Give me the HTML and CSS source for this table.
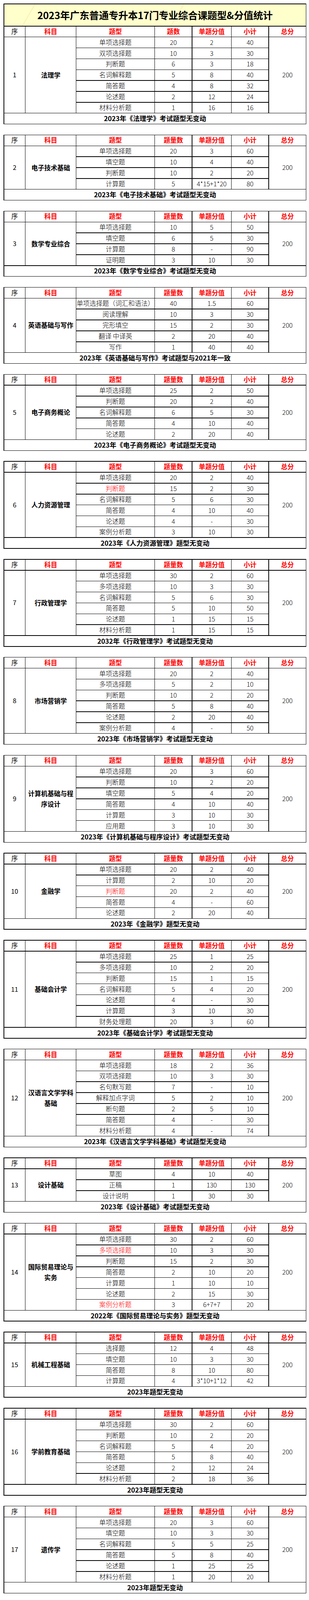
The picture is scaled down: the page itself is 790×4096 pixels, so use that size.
FILE: index.html
```html
<!DOCTYPE html>
<html lang="zh-CN">
<head>
<meta charset="utf-8">
<title>2023年广东普通专升本17门专业综合课题型&amp;分值统计</title>
<link rel="stylesheet" href="styles.css">
</head>
<body>
<main class="page">

<section class="sheet">
  <div class="title"><span class="mark mark-a"></span><span class="mark mark-b"></span><span class="title-text">2023年广东普通专升本17门专业综合课题型&amp;分值统计</span></div>
  <div class="hd hd-seq">序</div><div class="hd">科目</div><div class="hd">题型</div><div class="hd">题数</div><div class="hd">单题分值</div><div class="hd">小计</div><div class="hd">总分</div>
  <div class="seq r7">1</div><div class="subj r7">法理学</div>
  <div class="ty">单项选择题</div><div class="c4">20</div><div class="c5">2</div><div class="c6">40</div><div class="tot r7">200</div>
  <div class="ty">双项选择题</div><div class="c4">10</div><div class="c5">3</div><div class="c6">30</div>
  <div class="ty">判断题</div><div class="c4">6</div><div class="c5">3</div><div class="c6">18</div>
  <div class="ty">名词解释题</div><div class="c4">5</div><div class="c5">8</div><div class="c6">40</div>
  <div class="ty">简答题</div><div class="c4">4</div><div class="c5">8</div><div class="c6">32</div>
  <div class="ty">论述题</div><div class="c4">2</div><div class="c5">12</div><div class="c6">24</div>
  <div class="ty">材料分析题</div><div class="c4">1</div><div class="c5">16</div><div class="c6">16</div>
  <div class="foot">2023年《法理学》考试题型无变动</div>
</section>

<section class="sheet">
  <div class="hd hd-seq">序</div><div class="hd">科目</div><div class="hd">题型</div><div class="hd">题量数</div><div class="hd">单题分值</div><div class="hd">小计</div><div class="hd">总分</div>
  <div class="seq r4">2</div><div class="subj r4">电子技术基础</div>
  <div class="ty">单项选择题</div><div class="c4">20</div><div class="c5">3</div><div class="c6">60</div><div class="tot r4">200</div>
  <div class="ty">填空题</div><div class="c4">10</div><div class="c5">4</div><div class="c6">40</div>
  <div class="ty">判断题</div><div class="c4">10</div><div class="c5">2</div><div class="c6">20</div>
  <div class="ty">计算题</div><div class="c4">5</div><div class="c5">4*15+1*20</div><div class="c6">80</div>
  <div class="foot">2023年《电子技术基础》考试题型无变动</div>
</section>

<section class="sheet">
  <div class="hd hd-seq">序</div><div class="hd">科目</div><div class="hd">题型</div><div class="hd">题量数</div><div class="hd">单题分值</div><div class="hd">小计</div><div class="hd">总分</div>
  <div class="seq r4">3</div><div class="subj r4">数学专业综合</div>
  <div class="ty">单项选择题</div><div class="c4">10</div><div class="c5">5</div><div class="c6">50</div><div class="tot r4">200</div>
  <div class="ty">填空题</div><div class="c4">6</div><div class="c5">5</div><div class="c6">30</div>
  <div class="ty">计算题</div><div class="c4">8</div><div class="c5">-</div><div class="c6">90</div>
  <div class="ty">证明题</div><div class="c4">3</div><div class="c5">10</div><div class="c6">30</div>
  <div class="foot">2023年《数学专业综合》考试题型无变动</div>
</section>

<section class="sheet">
  <div class="hd hd-seq">序</div><div class="hd">科目</div><div class="hd">题型</div><div class="hd">题量数</div><div class="hd">单题分值</div><div class="hd">小计</div><div class="hd">总分</div>
  <div class="seq r5">4</div><div class="subj r5">英语基础与写作</div>
  <div class="ty">单项选择题（词汇和语法）</div><div class="c4">40</div><div class="c5">1.5</div><div class="c6">60</div><div class="tot r5">200</div>
  <div class="ty">阅读理解</div><div class="c4">10</div><div class="c5">3</div><div class="c6">30</div>
  <div class="ty">完形填空</div><div class="c4">15</div><div class="c5">2</div><div class="c6">30</div>
  <div class="ty">翻译 中译英</div><div class="c4">2</div><div class="c5">20</div><div class="c6">40</div>
  <div class="ty">写作</div><div class="c4">1</div><div class="c5">40</div><div class="c6">40</div>
  <div class="foot">2023年《英语基础与写作》考试题型与2021年一致</div>
</section>

<section class="sheet">
  <div class="hd hd-seq">序</div><div class="hd">科目</div><div class="hd">题型</div><div class="hd">题量数</div><div class="hd">单题分值</div><div class="hd">小计</div><div class="hd">总分</div>
  <div class="seq r5">5</div><div class="subj r5">电子商务概论</div>
  <div class="ty">单项选择题</div><div class="c4">25</div><div class="c5">2</div><div class="c6">50</div><div class="tot r5">200</div>
  <div class="ty">判断题</div><div class="c4">20</div><div class="c5">2</div><div class="c6">40</div>
  <div class="ty">名词解释题</div><div class="c4">6</div><div class="c5">5</div><div class="c6">30</div>
  <div class="ty">简答题</div><div class="c4">4</div><div class="c5">10</div><div class="c6">40</div>
  <div class="ty">论述题</div><div class="c4">2</div><div class="c5">20</div><div class="c6">40</div>
  <div class="foot">2023年《电子商务概论》考试题型无变动</div>
</section>

<section class="sheet">
  <div class="hd hd-seq">序</div><div class="hd">科目</div><div class="hd">题型</div><div class="hd">题量数</div><div class="hd">单题分值</div><div class="hd">小计</div><div class="hd">总分</div>
  <div class="seq r6">6</div><div class="subj r6">人力资源管理</div>
  <div class="ty">单项选择题</div><div class="c4">20</div><div class="c5">2</div><div class="c6">40</div><div class="tot r6">200</div>
  <div class="ty red">判断题</div><div class="c4">15</div><div class="c5">2</div><div class="c6">30</div>
  <div class="ty">名词解释题</div><div class="c4">5</div><div class="c5">6</div><div class="c6">30</div>
  <div class="ty">简答题</div><div class="c4">4</div><div class="c5">10</div><div class="c6">40</div>
  <div class="ty">论述题</div><div class="c4">4</div><div class="c5">-</div><div class="c6">30</div>
  <div class="ty">案例分析题</div><div class="c4">3</div><div class="c5">10</div><div class="c6">30</div>
  <div class="foot">2023年《人力资源管理》题型无变动</div>
</section>

<section class="sheet">
  <div class="hd hd-seq">序</div><div class="hd">科目</div><div class="hd">题型</div><div class="hd">题量数</div><div class="hd">单题分值</div><div class="hd">小计</div><div class="hd">总分</div>
  <div class="seq r6">7</div><div class="subj r6">行政管理学</div>
  <div class="ty">单项选择题</div><div class="c4">30</div><div class="c5">2</div><div class="c6">60</div><div class="tot r6">200</div>
  <div class="ty">多项选择题</div><div class="c4">10</div><div class="c5">3</div><div class="c6">30</div>
  <div class="ty">名词解释题</div><div class="c4">5</div><div class="c5">6</div><div class="c6">30</div>
  <div class="ty">简答题</div><div class="c4">5</div><div class="c5">10</div><div class="c6">50</div>
  <div class="ty">论述题</div><div class="c4">1</div><div class="c5">15</div><div class="c6">15</div>
  <div class="ty">材料分析题</div><div class="c4">1</div><div class="c5">15</div><div class="c6">15</div>
  <div class="foot">2032年《行政管理学》考试题型无变动</div>
</section>

<section class="sheet">
  <div class="hd hd-seq">序</div><div class="hd">科目</div><div class="hd">题型</div><div class="hd">题量数</div><div class="hd">单题分值</div><div class="hd">小计</div><div class="hd">总分</div>
  <div class="seq r6">8</div><div class="subj r6">市场营销学</div>
  <div class="ty">单项选择题</div><div class="c4">20</div><div class="c5">2</div><div class="c6">40</div><div class="tot r6">200</div>
  <div class="ty">多项选择题</div><div class="c4">5</div><div class="c5">2</div><div class="c6">10</div>
  <div class="ty">判断题</div><div class="c4">10</div><div class="c5">2</div><div class="c6">20</div>
  <div class="ty">简答题</div><div class="c4">5</div><div class="c5">8</div><div class="c6">40</div>
  <div class="ty">论述题</div><div class="c4">2</div><div class="c5">20</div><div class="c6">40</div>
  <div class="ty">案例分析题</div><div class="c4">4</div><div class="c5">-</div><div class="c6">50</div>
  <div class="foot">2023年《市场营销学》考试题型无变动</div>
</section>

<section class="sheet">
  <div class="hd hd-seq">序</div><div class="hd">科目</div><div class="hd">题型</div><div class="hd">题量数</div><div class="hd">单题分值</div><div class="hd">小计</div><div class="hd">总分</div>
  <div class="seq r6">9</div><div class="subj r6">计算机基础与程序设计</div>
  <div class="ty">单项选择题</div><div class="c4">20</div><div class="c5">3</div><div class="c6">60</div><div class="tot r6">200</div>
  <div class="ty">判断题</div><div class="c4">10</div><div class="c5">2</div><div class="c6">20</div>
  <div class="ty">填空题</div><div class="c4">5</div><div class="c5">4</div><div class="c6">20</div>
  <div class="ty">简答题</div><div class="c4">4</div><div class="c5">10</div><div class="c6">40</div>
  <div class="ty">计算题</div><div class="c4">3</div><div class="c5">10</div><div class="c6">30</div>
  <div class="ty">应用题</div><div class="c4">3</div><div class="c5">10</div><div class="c6">30</div>
  <div class="foot">2023年《计算机基础与程序设计》考试题型无变动</div>
</section>

<section class="sheet">
  <div class="hd hd-seq">序</div><div class="hd">科目</div><div class="hd">题型</div><div class="hd">题量数</div><div class="hd">单题分值</div><div class="hd">小计</div><div class="hd">总分</div>
  <div class="seq r5">10</div><div class="subj r5">金融学</div>
  <div class="ty">单项选择题</div><div class="c4">20</div><div class="c5">2</div><div class="c6">40</div><div class="tot r5">200</div>
  <div class="ty">计算题</div><div class="c4">2</div><div class="c5">10</div><div class="c6">20</div>
  <div class="ty red">判断题</div><div class="c4">20</div><div class="c5">2</div><div class="c6">40</div>
  <div class="ty">简答题</div><div class="c4">4</div><div class="c5">-</div><div class="c6">60</div>
  <div class="ty">论述题</div><div class="c4">2</div><div class="c5">20</div><div class="c6">40</div>
  <div class="foot">2023年《金融学》题型无变动</div>
</section>

<section class="sheet">
  <div class="hd hd-seq">序</div><div class="hd">科目</div><div class="hd">题型</div><div class="hd">题量数</div><div class="hd">单题分值</div><div class="hd">小计</div><div class="hd">总分</div>
  <div class="seq r7">11</div><div class="subj r7">基础会计学</div>
  <div class="ty">单项选择题</div><div class="c4">25</div><div class="c5">1</div><div class="c6">25</div><div class="tot r7">200</div>
  <div class="ty">多项选择题</div><div class="c4">10</div><div class="c5">2</div><div class="c6">20</div>
  <div class="ty">判断题</div><div class="c4">15</div><div class="c5">1</div><div class="c6">15</div>
  <div class="ty">名词解释题</div><div class="c4">5</div><div class="c5">4</div><div class="c6">20</div>
  <div class="ty">论述题</div><div class="c4">4</div><div class="c5">-</div><div class="c6">30</div>
  <div class="ty">计算题</div><div class="c4">3</div><div class="c5">10</div><div class="c6">30</div>
  <div class="ty">财务处理题</div><div class="c4">20</div><div class="c5">3</div><div class="c6">60</div>
  <div class="foot">2023年《基础会计学》考试题型无变动</div>
</section>

<section class="sheet">
  <div class="hd hd-seq">序</div><div class="hd">科目</div><div class="hd">题型</div><div class="hd">题量数</div><div class="hd">单题分值</div><div class="hd">小计</div><div class="hd">总分</div>
  <div class="seq r7">12</div><div class="subj r7">汉语言文学学科基础</div>
  <div class="ty">单项选择题</div><div class="c4">18</div><div class="c5">2</div><div class="c6">36</div><div class="tot r7">200</div>
  <div class="ty">双项选择题</div><div class="c4">10</div><div class="c5">3</div><div class="c6">30</div>
  <div class="ty">名句默写题</div><div class="c4">7</div><div class="c5">-</div><div class="c6">10</div>
  <div class="ty">解释加点字词</div><div class="c4">5</div><div class="c5">2</div><div class="c6">10</div>
  <div class="ty">断句题</div><div class="c4">2</div><div class="c5">5</div><div class="c6">10</div>
  <div class="ty">简答题</div><div class="c4">4</div><div class="c5">-</div><div class="c6">30</div>
  <div class="ty">材料分析题</div><div class="c4">4</div><div class="c5">-</div><div class="c6">74</div>
  <div class="foot">2023年《汉语言文学学科基础》考试题型无变动</div>
</section>

<section class="sheet">
  <div class="hd hd-seq">序</div><div class="hd">科目</div><div class="hd">题型</div><div class="hd">题量数</div><div class="hd">单题分值</div><div class="hd">小计</div><div class="hd">总分</div>
  <div class="seq r3">13</div><div class="subj r3">设计基础</div>
  <div class="ty">草图</div><div class="c4">4</div><div class="c5">10</div><div class="c6">40</div><div class="tot r3">200</div>
  <div class="ty">正稿</div><div class="c4">1</div><div class="c5">130</div><div class="c6">130</div>
  <div class="ty">设计说明</div><div class="c4">1</div><div class="c5">30</div><div class="c6">30</div>
  <div class="foot">2023年《设计基础》考试题型无变动</div>
</section>

<section class="sheet">
  <div class="hd hd-seq">序</div><div class="hd">科目</div><div class="hd">题型</div><div class="hd">题量数</div><div class="hd">单题分值</div><div class="hd">小计</div><div class="hd">总分</div>
  <div class="seq r7">14</div><div class="subj r7">国际贸易理论与实务</div>
  <div class="ty">单项选择题</div><div class="c4">30</div><div class="c5">2</div><div class="c6">60</div><div class="tot r7">200</div>
  <div class="ty red">多项选择题</div><div class="c4">10</div><div class="c5">3</div><div class="c6">30</div>
  <div class="ty">判断题</div><div class="c4">15</div><div class="c5">2</div><div class="c6">30</div>
  <div class="ty">简答题</div><div class="c4">2</div><div class="c5">10</div><div class="c6">20</div>
  <div class="ty">计算题</div><div class="c4">1</div><div class="c5">10</div><div class="c6">10</div>
  <div class="ty">论述题</div><div class="c4">2</div><div class="c5">15</div><div class="c6">30</div>
  <div class="ty red">案例分析题</div><div class="c4">3</div><div class="c5">6+7+7</div><div class="c6">20</div>
  <div class="foot">2022年《国际贸易理论与实务》题型无变动</div>
</section>

<section class="sheet">
  <div class="hd hd-seq">序</div><div class="hd">科目</div><div class="hd">题型</div><div class="hd">题量数</div><div class="hd">单题分值</div><div class="hd">小计</div><div class="hd">总分</div>
  <div class="seq r4">15</div><div class="subj r4">机械工程基础</div>
  <div class="ty">选择题</div><div class="c4">12</div><div class="c5">4</div><div class="c6">48</div><div class="tot r4">200</div>
  <div class="ty">填空题</div><div class="c4">10</div><div class="c5">3</div><div class="c6">30</div>
  <div class="ty">简答题</div><div class="c4">8</div><div class="c5">10</div><div class="c6">80</div>
  <div class="ty">计算题</div><div class="c4">4</div><div class="c5">3*10+1*12</div><div class="c6">42</div>
  <div class="foot">2023年题型无变动</div>
</section>

<section class="sheet">
  <div class="hd hd-seq">序</div><div class="hd">科目</div><div class="hd">题型</div><div class="hd">题量数</div><div class="hd">单题分值</div><div class="hd">小计</div><div class="hd">总分</div>
  <div class="seq r6">16</div><div class="subj r6">学前教育基础</div>
  <div class="ty">单项选择题</div><div class="c4">30</div><div class="c5">2</div><div class="c6">60</div><div class="tot r6">200</div>
  <div class="ty">判断题</div><div class="c4">10</div><div class="c5">2</div><div class="c6">20</div>
  <div class="ty">名词解释题</div><div class="c4">5</div><div class="c5">4</div><div class="c6">20</div>
  <div class="ty">简答题</div><div class="c4">5</div><div class="c5">8</div><div class="c6">40</div>
  <div class="ty">论述题</div><div class="c4">2</div><div class="c5">12</div><div class="c6">24</div>
  <div class="ty">材料分析题</div><div class="c4">2</div><div class="c5">18</div><div class="c6">36</div>
  <div class="foot">2023年题型无变动</div>
</section>

<section class="sheet">
  <div class="hd hd-seq">序</div><div class="hd">科目</div><div class="hd">题型</div><div class="hd">题量数</div><div class="hd">单题分值</div><div class="hd">小计</div><div class="hd">总分</div>
  <div class="seq r6">17</div><div class="subj r6">遗传学</div>
  <div class="ty">单项选择题</div><div class="c4">20</div><div class="c5">3</div><div class="c6">60</div><div class="tot r6">200</div>
  <div class="ty">填空题</div><div class="c4">10</div><div class="c5">3</div><div class="c6">30</div>
  <div class="ty">名词解释题</div><div class="c4">5</div><div class="c5">5</div><div class="c6">25</div>
  <div class="ty">简答题</div><div class="c4">5</div><div class="c5">8</div><div class="c6">40</div>
  <div class="ty">论述题</div><div class="c4">1</div><div class="c5">25</div><div class="c6">25</div>
  <div class="ty">材料分析题</div><div class="c4">1</div><div class="c5">20</div><div class="c6">20</div>
  <div class="foot">2023年题型无变动</div>
</section>

</main>
</body>
</html>
```

FILE: styles.css
```css
html, body {
  margin: 0;
  padding: 0;
  background: #ffffff;
}

.page {
  padding: 9.05px 0 8px 9.35px;
  font-family: "Noto Sans CJK SC", "Noto Sans", sans-serif;
  color: #000;
}

.sheet {
  display: grid;
  width: 774px;
  box-sizing: border-box;
  grid-template-columns: 53px 128.6px 199.2px 94.1px 99px 94.1px 94px;
  grid-auto-rows: 26.37px;
  column-gap: 1.5px;
  row-gap: 1.5px;
  padding: 1.5px;
  background: #000;
  margin-bottom: 26.37px;
}

.sheet > div {
  background: #fff;
  display: flex;
  align-items: center;
  justify-content: center;
  text-align: center;
  font-size: 16.5px;
  line-height: 1.2;
  white-space: nowrap;
  overflow: hidden;
}

.sheet:first-child {
  grid-template-rows: 55.55px;
}

.sheet > .title {
  grid-column: 1 / -1;
  position: relative;
  background: #ffffcc;
  font-size: 25px;
  font-weight: 700;
  letter-spacing: -0.2px;
}

.title-text {
  position: relative;
}

/* faint diagonal watermark strokes in the title band */
.mark {
  position: absolute;
  top: -10px;
  width: 2px;
  height: 80px;
  background: #f6f0b8;
  transform: rotate(30deg);
}

.mark-a { left: 60px; }
.mark-b { left: 440px; }

.hd {
  color: #ff0000;
  font-weight: 700;
}

.hd-seq {
  color: #000;
  font-weight: 400;
}

.seq {
  grid-column: 1;
  font-weight: 400;
}

.sheet > .subj {
  grid-column: 2;
  font-weight: 700;
  white-space: normal;
  line-height: 27px;
  padding: 0 4px;
}

.ty {
  grid-column: 3;
  font-weight: 300;
}

.c4 { grid-column: 4; font-weight: 300; }
.c5 { grid-column: 5; font-weight: 300; }
.c6 { grid-column: 6; font-weight: 300; }

.tot {
  grid-column: 7;
  font-weight: 300;
}

.red {
  color: #ff0000;
}

.sheet > .foot {
  grid-column: 1 / -1;
  font-weight: 700;
  font-size: 17px;
}

.r3 { grid-row: span 3; }
.r4 { grid-row: span 4; }
.r5 { grid-row: span 5; }
.r6 { grid-row: span 6; }
.r7 { grid-row: span 7; }
```
